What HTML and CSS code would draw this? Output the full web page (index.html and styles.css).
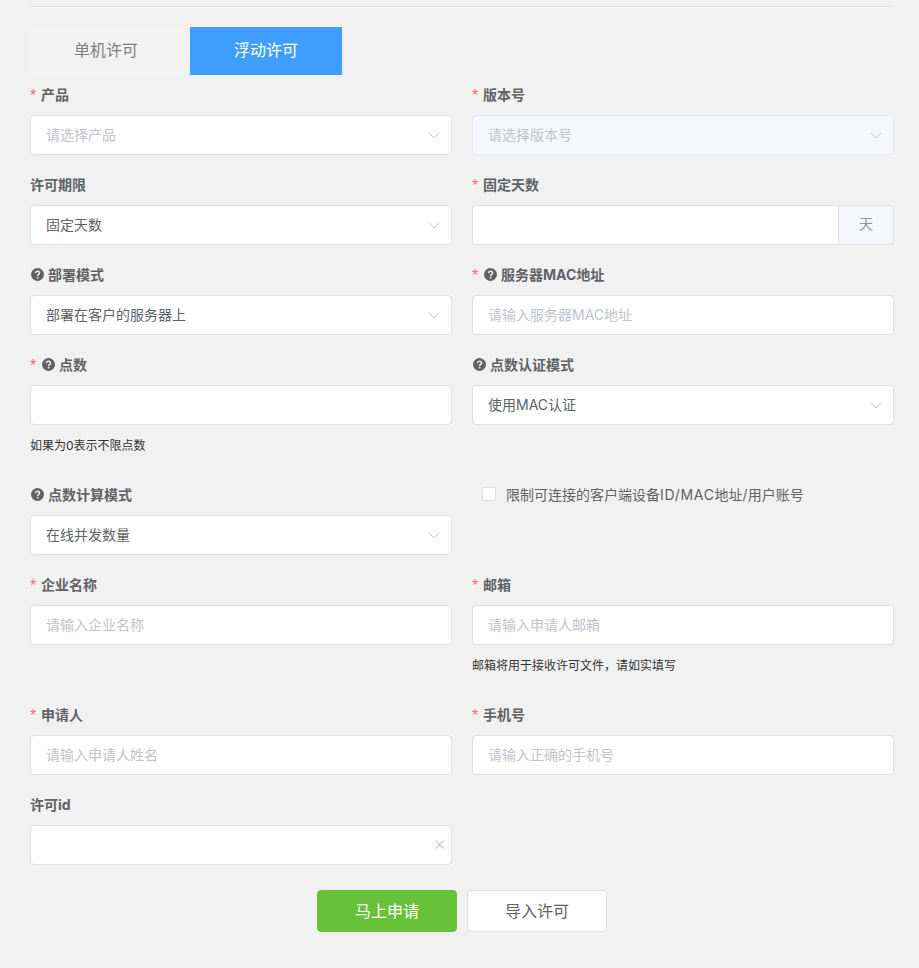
FILE: index.html
```html
<!DOCTYPE html>
<html lang="zh-CN">
<head>
<meta charset="utf-8">
<title>申请许可</title>
<link rel="stylesheet" href="styles.css">
</head>
<body>
<svg class="defs" width="0" height="0" aria-hidden="true">
  <symbol id="q" viewBox="0 0 13 13">
    <circle cx="6.5" cy="6.5" r="6.5" fill="#606266"/>
    <path d="M4.4 5.1C4.5 3.9 5.4 3.2 6.5 3.2 7.7 3.2 8.6 3.9 8.6 5 8.6 6.4 6.6 6.4 6.6 7.9" fill="none" stroke="#f1f1f1" stroke-width="1.4"/>
    <rect x="5.8" y="8.8" width="1.6" height="1.6" fill="#f1f1f1"/>
  </symbol>
  <symbol id="chev" viewBox="0 0 12 7">
    <path d="M.7.8 6 6 11.3.8" fill="none" stroke="#c0c4cc" stroke-width="1"/>
  </symbol>
</svg>
<main class="page">
  <div class="tabs">
    <div class="tab">单机许可</div>
    <div class="tab tab-active">浮动许可</div>
  </div>
  <form class="form">
    <div class="item">
      <div class="label"><span class="req">*</span>产品</div>
      <div class="control"><span class="ph">请选择产品</span><svg class="chev"><use href="#chev"/></svg></div>
    </div>
    <div class="item">
      <div class="label"><span class="req">*</span>版本号</div>
      <div class="control disabled"><span class="ph">请选择版本号</span><svg class="chev"><use href="#chev"/></svg></div>
    </div>

    <div class="item">
      <div class="label">许可期限</div>
      <div class="control"><span class="val">固定天数</span><svg class="chev"><use href="#chev"/></svg></div>
    </div>
    <div class="item">
      <div class="label"><span class="req">*</span>固定天数</div>
      <div class="group">
        <div class="control group-input"></div>
        <div class="append">天</div>
      </div>
    </div>

    <div class="item">
      <div class="label"><svg class="q"><use href="#q"/></svg>部署模式</div>
      <div class="control"><span class="val">部署在客户的服务器上</span><svg class="chev"><use href="#chev"/></svg></div>
    </div>
    <div class="item">
      <div class="label"><span class="req">*</span><svg class="q"><use href="#q"/></svg>服务器MAC地址</div>
      <div class="control"><span class="ph">请输入服务器MAC地址</span></div>
    </div>

    <div class="item">
      <div class="label"><span class="req">*</span><svg class="q"><use href="#q"/></svg>点数</div>
      <div class="control"></div>
      <div class="help">如果为0表示不限点数</div>
    </div>
    <div class="item">
      <div class="label"><svg class="q"><use href="#q"/></svg>点数认证模式</div>
      <div class="control"><span class="val">使用MAC认证</span><svg class="chev"><use href="#chev"/></svg></div>
    </div>

    <div class="item">
      <div class="label"><svg class="q"><use href="#q"/></svg>点数计算模式</div>
      <div class="control"><span class="val">在线并发数量</span><svg class="chev"><use href="#chev"/></svg></div>
    </div>
    <div class="item">
      <div class="check"><span class="box"></span><span>限制可连接的客户端设备<span class="latin">ID/MAC</span>地址/用户账号</span></div>
    </div>

    <div class="item">
      <div class="label"><span class="req">*</span>企业名称</div>
      <div class="control"><span class="ph">请输入企业名称</span></div>
    </div>
    <div class="item">
      <div class="label"><span class="req">*</span>邮箱</div>
      <div class="control"><span class="ph">请输入申请人邮箱</span></div>
      <div class="help">邮箱将用于接收许可文件，请如实填写</div>
    </div>

    <div class="item">
      <div class="label"><span class="req">*</span>申请人</div>
      <div class="control"><span class="ph">请输入申请人姓名</span></div>
    </div>
    <div class="item">
      <div class="label"><span class="req">*</span>手机号</div>
      <div class="control"><span class="ph">请输入正确的手机号</span></div>
    </div>

    <div class="item">
      <div class="label">许可id</div>
      <div class="control clearable">
        <svg class="clear" viewBox="0 0 10 10"><path d="M.5.5l9 9M9.500.5l-9 9" fill="none" stroke="#c0c4cc" stroke-width="1.2"/></svg>
      </div>
    </div>
  </form>
  <div class="actions">
    <button class="btn btn-primary" type="button">马上申请</button>
    <button class="btn" type="button">导入许可</button>
  </div>
</main>
</body>
</html>
```
FILE: styles.css
```css
* { box-sizing: border-box; }
html, body { margin: 0; height: 968px; overflow: hidden; }
body {
  background: #f1f1f1;
  color: #606266;
  font-family: Inter, "Noto Sans CJK SC", sans-serif;
  font-size: 14px;
}
.defs { position: absolute; }
.page {
  width: 864px;
  margin-left: 30px;
  padding-top: 6px;
}
.tabs {
  display: flex;
  gap: 8px;
  padding-top: 20px;
  border-top: 1px solid #e6e6e6;
}
.tab {
  width: 152px;
  height: 48px;
  padding-bottom: 2px;
  line-height: 46px;
  text-align: center;
  font-size: 16px;
  color: #7f7f7f;
  background: #f2f2f2;
}
.tab-active { background: #409eff; color: #fff; }
.form {
  display: grid;
  grid-template-columns: 422px 422px;
  column-gap: 20px;
  row-gap: 10px;
}
.item { min-width: 0; }
.label {
  display: flex;
  align-items: center;
  height: 40px;
  padding-bottom: 2px;
  font-weight: 700;
  color: #606266;
}
.req {
  width: 11px;
  flex: none;
  margin-top: 4px;
  color: #f56c6c;
  font-size: 16px;
  font-weight: 400;
  font-family: "Liberation Sans", sans-serif;
  line-height: 14px;
}
.q { width: 13px; height: 13px; margin: 0 4.5px 0 .5px; flex: none; }
.control {
  position: relative;
  display: flex;
  align-items: center;
  height: 40px;
  padding: 0 15px 2px;
  background: #fff;
  border: 1px solid #dcdfe6;
  border-radius: 4px;
}
.ph { color: #c0c4cc; }
.val { color: #606266; }
.chev {
  position: absolute;
  right: 11px;
  top: 16px;
  width: 12px;
  height: 7px;
}
.disabled { background: #f5f7fa; border-color: #e4e7ed; }
.group { display: flex; }
.group-input { flex: 1; border-radius: 4px 0 0 4px; border-right: 0; }
.append {
  width: 56px;
  height: 40px;
  line-height: 36px;
  text-align: center;
  color: #909399;
  background: #f5f7fa;
  border: 1px solid #dcdfe6;
  border-radius: 0 4px 4px 0;
}
.help {
  height: 40px;
  line-height: 42px;
  font-size: 12px;
  color: #333;
}
.check {
  display: flex;
  align-items: center;
  height: 40px;
  padding-left: 10px;
  padding-bottom: 2px;
  color: #606266;
}
.latin { letter-spacing: .7px; }
.box {
  width: 14px;
  height: 14px;
  margin-right: 10px;
  background: #fff;
  border: 1px solid #dcdfe6;
  border-radius: 2px;
}
.clear {
  position: absolute;
  right: 7px;
  top: 14px;
  width: 9px;
  height: 9px;
}
.actions {
  display: flex;
  justify-content: center;
  gap: 10px;
  margin-top: 25px;
}
.btn {
  width: 140px;
  height: 42px;
  padding: 0 0 2px;
  font: inherit;
  font-size: 16px;
  color: #606266;
  background: #fff;
  border: 1px solid #dcdfe6;
  border-radius: 4px;
}
.btn-primary { background: #67c23a; border-color: #67c23a; color: #fff; }
```
